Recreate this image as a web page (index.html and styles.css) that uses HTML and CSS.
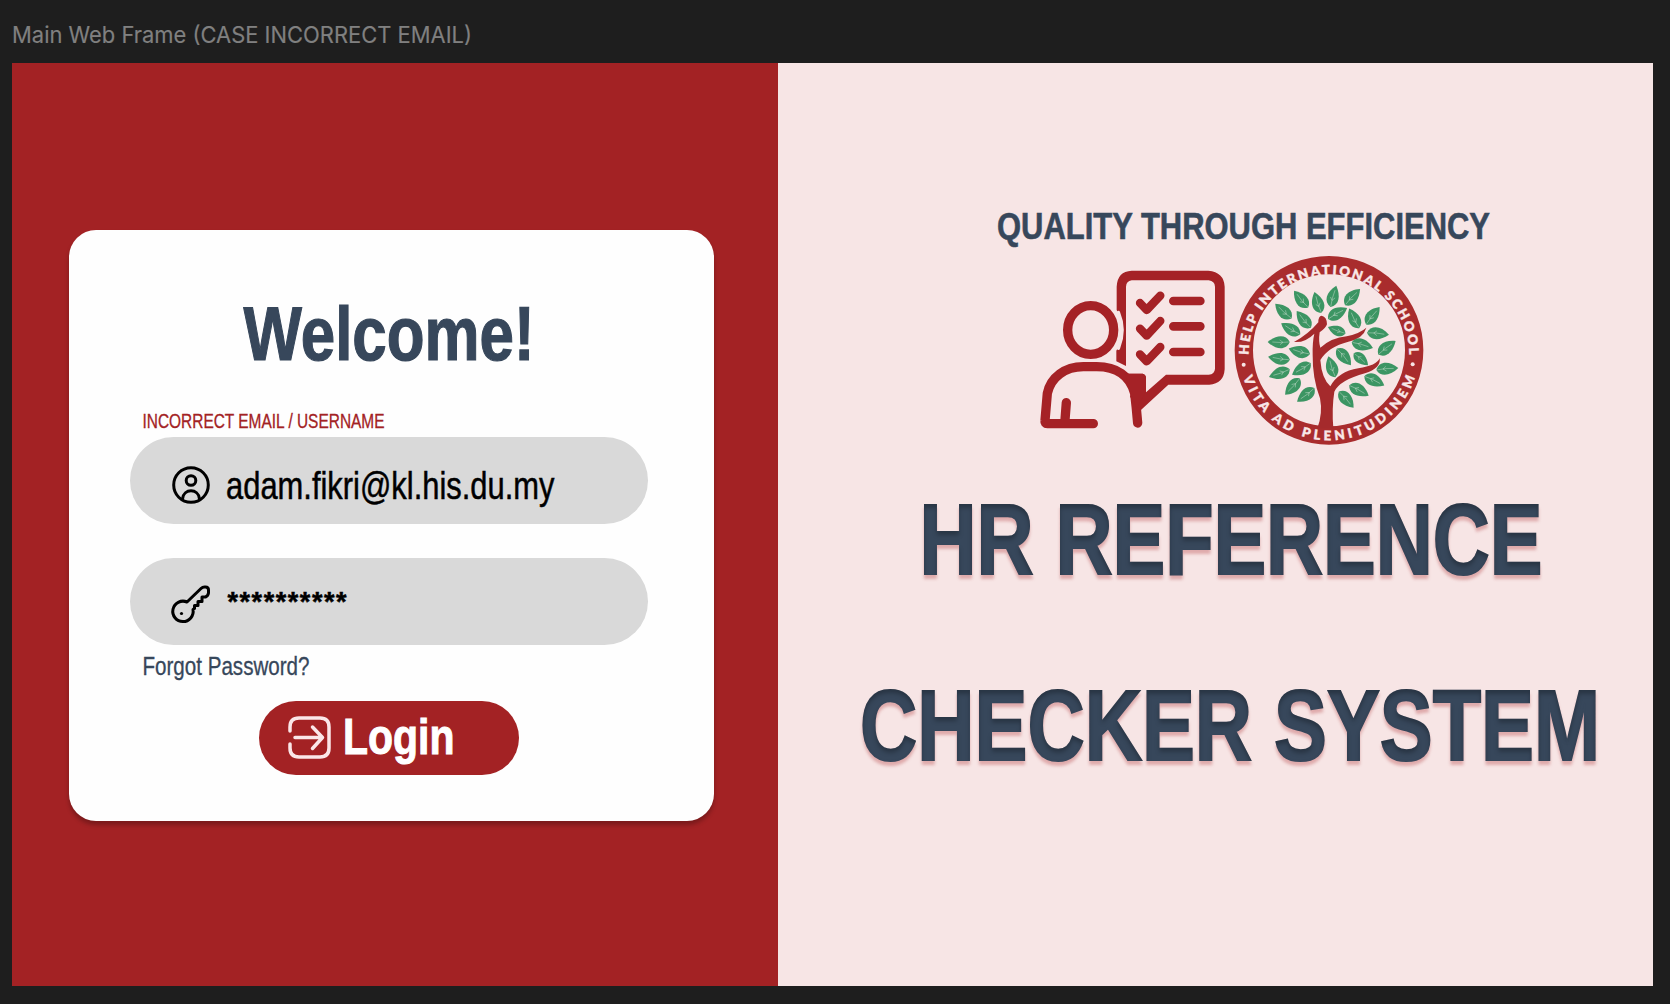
FILE: index.html
```html
<!DOCTYPE html>
<html lang="en">
<head>
<meta charset="utf-8">
<title>HR Reference Checker System</title>
<link rel="stylesheet" href="styles.css">
</head>
<body>
<header class="frame-name"><svg class="line" width="458" height="24"><text class="inter" x="-1" y="20" textLength="460" lengthAdjust="spacingAndGlyphs">Main Web Frame (CASE INCORRECT EMAIL)</text></svg></header>
<main class="frame">
  <section class="left">
    <form class="card">
      <h1 class="welcome"><svg class="line" width="287" height="60"><text x=".5" y="56" textLength="291" lengthAdjust="spacingAndGlyphs">Welcome!</text></svg></h1>
      <p class="error"><svg class="line" width="241" height="18"><text x="-.5" y="16" textLength="242" lengthAdjust="spacingAndGlyphs">INCORRECT EMAIL / USERNAME</text></svg></p>
      <div class="field">
        <svg class="icon" width="38" height="38" viewBox="0 0 38 38" fill="none" stroke="#000" stroke-width="3"><circle cx="19" cy="19" r="17.300"/><circle cx="19" cy="14.500" r="4.800"/><path d="M10.500 33C11.500 22 26.500 22 27.500 33"/></svg>
        <svg class="line email" width="328" height="38"><text x="-1" y="32.500" textLength="328.500" lengthAdjust="spacingAndGlyphs">adam.fikri@kl.his.du.my</text></svg>
      </div>
      <div class="field second">
        <svg class="line icon" width="38" height="38" viewBox="0 0 38 38" fill="none" stroke="#000" stroke-width="3" stroke-linejoin="round"><path d="M15 16L29 2.500Q30.500 1 32.500 1H33.500Q36.500 1 36.500 4V7Q36 10 33.500 11H30V15.500H26V19.500H22.500V22.500L21 23.500A10.200 10.200 0 1 1 15 16Z"/><circle cx="9.500" cy="27.500" r="1.600" fill="#000" stroke="none"/></svg>
        <svg class="line email" width="120" height="38"><text class="stars" x=".5" y="25" textLength="119" lengthAdjust="spacing">**********</text></svg>
      </div>
      <a class="forgot"><svg class="line" width="168" height="24"><text x="-.5" y="21" textLength="167" lengthAdjust="spacingAndGlyphs">Forgot Password?</text></svg></a>
      <button class="login" type="button">
        <svg width="43" height="43" viewBox="0 0 43 43" fill="none" stroke="#fbe6e8" stroke-width="3.500" stroke-linecap="round" stroke-linejoin="round"><path d="M2 15V11Q2 2 11 2H32Q41 2 41 11V32Q41 41 32 41H11Q2 41 2 32V28"/><path d="M7 21.500H33M24.500 11L34.500 21.500L24.500 32.500"/></svg>
        <svg class="line" width="108" height="50"><text x="-3" y="43" textLength="111.500" lengthAdjust="spacingAndGlyphs">Login</text></svg>
      </button>
    </form>
  </section>
  <section class="right">
    <p class="motto"><svg class="line" width="491" height="32"><text x="-1" y="27" textLength="493" lengthAdjust="spacingAndGlyphs">QUALITY THROUGH EFFICIENCY</text></svg></p>
    <div class="logos">
      <svg class="person" width="205" height="200" viewBox="0 0 615 600" fill="none" stroke="#a52226" stroke-width="28" stroke-linecap="round" stroke-linejoin="round">
        <ellipse cx="212" cy="240" rx="69" ry="73"/>
        <path d="M220 521H82Q74 521 75 512L82 430C92 382 135 350 190 350H230C290 350 330 378 344 430Q349 470 353 519M139 458L135 510"/>
        <path stroke="none" fill="#a52226" d="M290 180V110Q292 64 335 62H565Q612 66 614 110V358Q611 402 568 404H445L362 481L330 440L345 400L312 371H368Q378 373 378 384V427L438 374H566Q584 372 585 356V110Q584 93 566 91H335Q319 93 318 110V348L289 334V302Q327 240 290 180Z"/>
        <path stroke="none" fill="#a52226" d="M315 371H368Q378 374 378 385V425L350 475L332 430Z"/>
        <path stroke="#f7e5e5" stroke-width="11" d="M295 188Q317 240 295 294"/>
        <path stroke-width="25" d="M360 159L380 180L421 137M360 236L380 257L421 213M360 313L380 334L421 291"/>
        <path stroke-width="26" d="M460 153H541M460 229H541M460 306H541"/>
      </svg>
      <svg class="seal" width="210" height="210" viewBox="0 0 630 630">
        <defs>
          <path id="top" d="M71 330A241 241 0 0 1 553 330"/>
          <path id="bottom" d="M54.500 397A270 270 0 0 0 571 393"/>
          <g id="leaf"><path fill="#3c9563" d="M-32 0C-22 -25 8 -25 34 0C8 21 -20 24 -32 0Z"/><path d="M-29 0Q-5 -3 20 0M-12 -1L-3 -8M-12 -1L-2 6" fill="none" stroke="#c5dccc" stroke-width="1.400"/></g>
        </defs>
        <circle cx="312" cy="316" r="255.500" fill="none" stroke="#a92c2d" stroke-width="55"/>
        <path fill="#a52a2c" d="M277 550Q294 505 285 460Q262 400 263 330Q262 290 268 266Q240 294 207 291Q250 268 280 232Q280 212 290 212Q306 216 306 238Q302 250 284 262Q280 290 286 308Q320 278 365 274Q405 265 424 248Q415 280 370 290Q310 305 286 345Q290 400 316 424Q340 380 400 370Q455 362 464 340Q468 370 420 385Q345 405 328 440Q320 490 325 550Z"/>
        <use href="#leaf" transform="translate(229 163) rotate(-130)"/><use href="#leaf" transform="translate(279 173) rotate(-108)"/><use href="#leaf" transform="translate(325 155) rotate(-75)"/><use href="#leaf" transform="translate(382 157) rotate(-47)"/><use href="#leaf" transform="translate(176 199) rotate(-138)"/><use href="#leaf" transform="translate(237 224) rotate(-130)"/><use href="#leaf" transform="translate(337 206) rotate(-30)"/><use href="#leaf" transform="translate(388 221) rotate(-117)"/><use href="#leaf" transform="translate(443 213) rotate(-52)"/><use href="#leaf" transform="translate(198 252) rotate(-150)"/><use href="#leaf" transform="translate(336 256) rotate(-160) scale(.85)"/><use href="#leaf" transform="translate(458 266) rotate(5)"/><use href="#leaf" transform="translate(162 291) rotate(180)"/><use href="#leaf" transform="translate(224 319) rotate(-165)"/><use href="#leaf" transform="translate(411 300) rotate(15)"/><use href="#leaf" transform="translate(485 309) rotate(-38)"/><use href="#leaf" transform="translate(163 340) rotate(188)"/><use href="#leaf" transform="translate(356 335) rotate(50)"/><use href="#leaf" transform="translate(407 342) rotate(40) scale(.85)"/><use href="#leaf" transform="translate(164 384) rotate(160)"/><use href="#leaf" transform="translate(230 371) rotate(148)"/><use href="#leaf" transform="translate(321 366) rotate(-108)"/><use href="#leaf" transform="translate(486 372) rotate(-5)"/><use href="#leaf" transform="translate(203 424) rotate(132)"/><use href="#leaf" transform="translate(243 449) rotate(142)"/><use href="#leaf" transform="translate(401 436) rotate(28)"/><use href="#leaf" transform="translate(447 407) rotate(25)"/><use href="#leaf" transform="translate(363 463) rotate(48)"/>
        <g class="ring-text"><text><textPath href="#top" textLength="756" lengthAdjust="spacing">HELP INTERNATIONAL SCHOOL</textPath></text><text><textPath href="#bottom" textLength="684" lengthAdjust="spacing">VITA AD PLENITUDINEM</textPath></text></g>
        <circle cx="56" cy="359" r="6" fill="#f7e5e5"/><circle cx="563" cy="358" r="6" fill="#f7e5e5"/>
      </svg>
    </div>
    <h2 class="headline">
      <svg class="line" width="624" height="120"><defs><filter id="relief" x="-5%" y="-5%" width="110%" height="110%" color-interpolation-filters="sRGB"><feFlood flood-color="#a52226" flood-opacity=".3"/><feComposite in2="SourceAlpha" operator="in"/><feOffset dy="4"/><feGaussianBlur stdDeviation="1.800" result="drop"/><feOffset in="SourceAlpha" dy="4"/><feGaussianBlur stdDeviation="2" result="moved"/><feFlood flood-color="#000" flood-opacity=".25"/><feComposite in2="moved" operator="out"/><feComposite in2="SourceAlpha" operator="in" result="inner"/><feMerge><feMergeNode in="drop"/><feMergeNode in="SourceGraphic"/><feMergeNode in="inner"/></feMerge></filter></defs><text x="1.500" y="92" textLength="623" lengthAdjust="spacingAndGlyphs">HR REFERENCE</text></svg>
      <svg class="line system" width="742" height="120"><text x="3" y="92" textLength="740" lengthAdjust="spacingAndGlyphs">CHECKER SYSTEM</text></svg>
    </h2>
  </section>
</main>
</body>
</html>
```
FILE: styles.css
```css
* { box-sizing: border-box; }
body { margin: 0; height: 1004px; overflow: hidden; background: #1e1e1e; font-family: "Liberation Sans Narrow", "Liberation Sans", sans-serif; }
h1, h2, p { margin: 0; }
svg { display: block; flex: none; }
.line { overflow: visible; }
.line text { fill: currentColor; stroke: currentColor; stroke-width: .3px; }
.frame-name { height: 62.5px; padding: 23px 0 0 13px; color: #808080; }
.frame-name .inter { font: 400 22.5px Inter, sans-serif; stroke-width: .15px; }
.frame { display: flex; width: 1641px; height: 923px; margin-left: 12px; }
.left { width: 766px; padding: 167.5px 0 0 57px; background: #a32224; }
.right { flex: 1; padding-top: 147.5px; background: #f7e5e5; color: #37475b; }
.card { width: 645px; height: 591px; padding-top: 74px; border-radius: 27px; background: #fefefe; box-shadow: 0 4px 4px rgba(0, 0, 0, .25); }
.welcome { margin-left: 174px; color: #37475b; font-size: 75.6px; font-weight: 700; }
.welcome text { stroke-width: 1.2px; }
.error { margin: 48px 0 7px 74px; color: #a32224; font-size: 19.5px; }
.field { display: flex; width: 518.5px; height: 87px; margin-left: 60.5px; padding: 29px 0 0 42.5px; border-radius: 43.5px; background: #d9d9d9; }
.second { margin-top: 33.5px; padding-top: 28px; }
.email { margin-left: 17px; font-size: 39px; }
.email text { stroke-width: .5px; }
.email .stars { font-size: 27px; font-weight: 700; }
.forgot { display: block; margin: 9.5px 0 0 74px; color: #37475b; font-size: 25.2px; }
.login { display: flex; width: 260.5px; height: 73.5px; margin: 23px 0 0 189.5px; padding: 15px 0 0 29.5px; border: 0; border-radius: 37px; background: #a32224; color: #fff; font-family: inherit; font-size: 50px; font-weight: 700; }
.login .line { margin: -5px 0 0 15px; }
.login text { stroke-width: 1px; }
.motto { margin-left: 220px; padding-top: 2px; font-size: 37.2px; font-weight: 700; }
.motto text { stroke-width: .6px; }
.logos { display: flex; margin: 1px 0 0 242px; }
.person { margin-top: 5px; }
.ring-text { fill: #f8e6e6; stroke: #f8e6e6; stroke-width: .8px; font: 800 40px Lato, sans-serif; }
.headline { margin: 27px 0 0 79px; font-size: 99.5px; font-weight: 700; filter: url(#relief); }
.headline text { stroke-width: 2px; }
.headline > .line { margin-left: 61px; }
.headline > .system { margin: 66px 0 0; }
```
